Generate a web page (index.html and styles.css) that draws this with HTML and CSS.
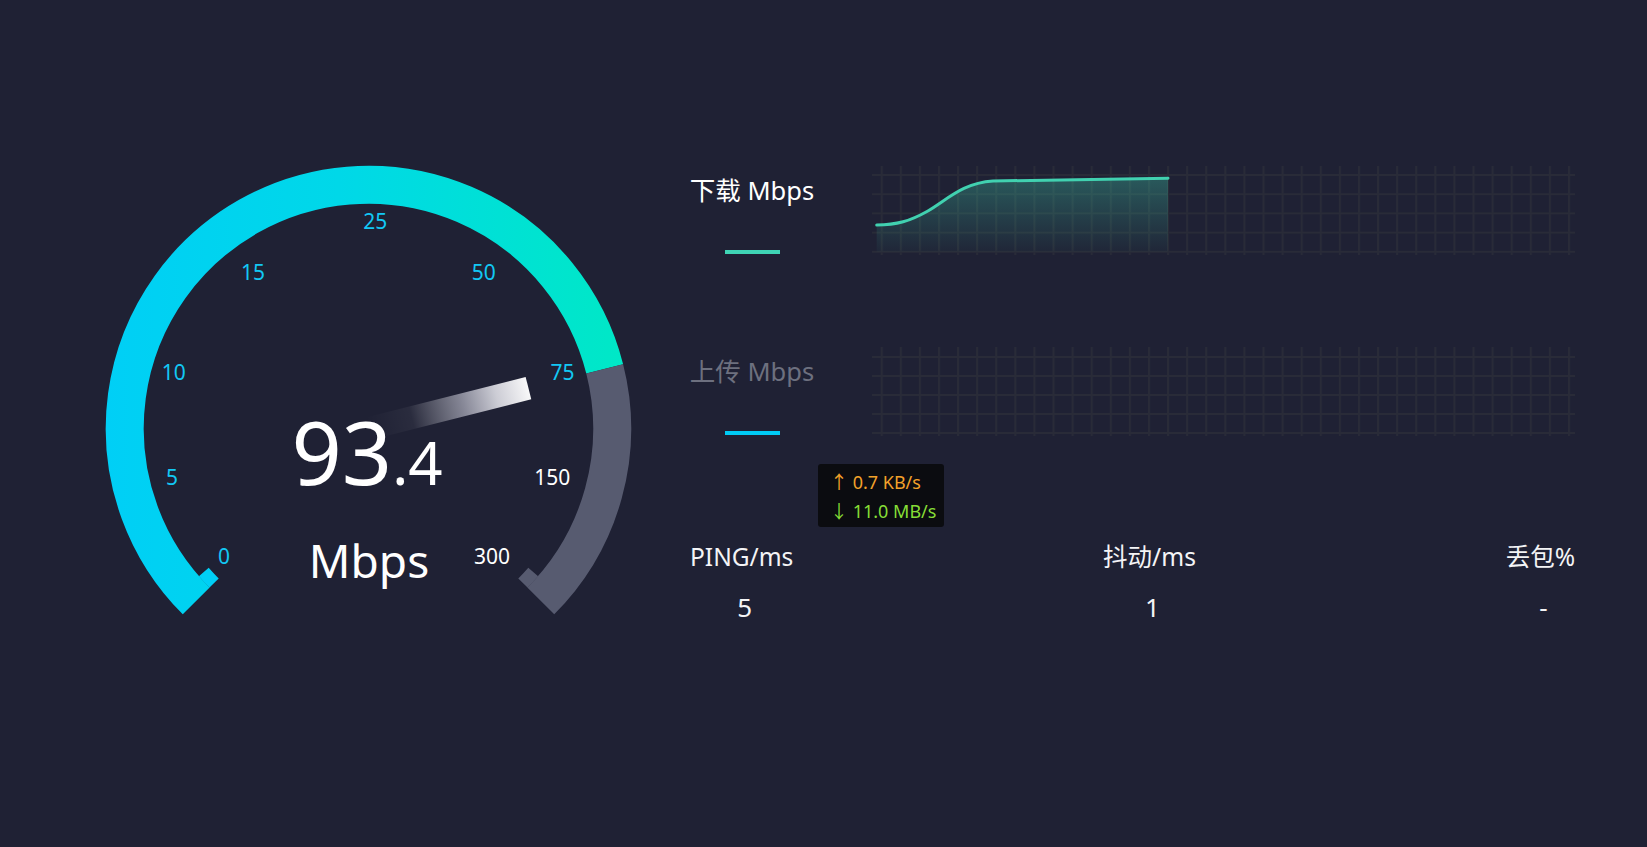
FILE: index.html
```html
<!DOCTYPE html>
<html lang="zh-CN">
<head>
<meta charset="utf-8">
<title>网络测速</title>
<link rel="stylesheet" href="styles.css">
</head>
<body>
<main class="page">
  <section class="gauge-panel">
    <svg class="gauge" viewBox="88 150 560 480" width="560" height="480">
      <defs>
        <linearGradient id="arcGrad" gradientUnits="userSpaceOnUse" x1="105" y1="0" x2="625" y2="0">
          <stop offset="0" stop-color="#00cff6"/>
          <stop offset="0.45" stop-color="#00d8e8"/>
          <stop offset="1" stop-color="#00e8c6"/>
        </linearGradient>
        <linearGradient id="ptrGrad" gradientUnits="userSpaceOnUse" x1="0" y1="0" x2="165" y2="0">
          <stop offset="0" stop-color="#ffffff" stop-opacity="0"/>
          <stop offset="0.27" stop-color="#ffffff" stop-opacity="0.05"/>
          <stop offset="0.58" stop-color="#e8e8f4" stop-opacity="0.5"/>
          <stop offset="0.8" stop-color="#f2f2f8" stop-opacity="0.82"/>
          <stop offset="1" stop-color="#ffffff" stop-opacity="0.97"/>
        </linearGradient>
      </defs>
      <path class="arc-done" d="M196.2,600.9 A243.7,243.7 0 1 1 604.7,368.8"/>
      <path class="arc-rest" d="M604.7,368.8 A243.7,243.7 0 0 1 540.8,600.9"/>
      <path class="cap cap-start" d="M214.1,583 A218.3,218.3 0 0 1 203.8,571.9"/>
      <path class="cap cap-end" d="M533.2,571.9 A218.3,218.3 0 0 1 522.9,583"/>
      <g class="scale">
        <text x="224" y="556.2">0</text>
        <text x="172" y="477.2">5</text>
        <text x="173.7" y="372">10</text>
        <text x="253" y="272.3">15</text>
        <text x="375.2" y="221.3">25</text>
        <text x="483.7" y="272.3">50</text>
        <text x="562.5" y="372">75</text>
        <text class="pending" x="552.3" y="477.2">150</text>
        <text class="pending" x="492" y="556.2">300</text>
      </g>
      <g transform="translate(368.5 428.6) rotate(-14.2)">
        <rect x="0" y="-11.5" width="165" height="23" fill="url(#ptrGrad)"/>
      </g>
      <text class="speed" x="367" y="485">93<tspan class="speed-decimal">.4</tspan></text>
      <text class="speed-unit" x="369" y="578">Mbps</text>
    </svg>
  </section>

  <section class="results">
    <div class="metric">
      <div class="metric-label">
        <span class="metric-name">下载 Mbps</span>
        <span class="metric-bar bar-down"></span>
      </div>
      <svg class="chart" viewBox="0 0 703 90" width="703" height="90">
        <defs>
          <pattern id="vlinesA" patternUnits="userSpaceOnUse" x="8.7" y="0" width="19.09" height="90">
            <rect class="grid-line" x="0" y="0" width="2" height="90"/>
          </pattern>
          <linearGradient id="areaGrad" x1="0" y1="0" x2="0" y2="1">
            <stop offset="0" stop-color="#3fd0b0" stop-opacity="0.32"/>
            <stop offset="1" stop-color="#3fd0b0" stop-opacity="0.03"/>
          </linearGradient>
        </defs>
        <rect x="0" y="0" width="700" height="89" fill="url(#vlinesA)"/>
        <rect class="grid-line" x="0" y="8" width="703" height="2"/>
        <rect class="grid-line" x="0" y="27.2" width="703" height="2"/>
        <rect class="grid-line" x="0" y="46.4" width="703" height="2"/>
        <rect class="grid-line" x="0" y="65.6" width="703" height="2"/>
        <rect class="grid-line" x="0" y="84.8" width="703" height="2"/>
        <path class="area" d="M4.7,59 C25,59 38,55 55,45.5 C75,34 90,17 121,15 L296,12.3 L296,85.8 L4.7,85.8 Z"/>
        <path class="line-down" d="M4.7,59 C25,59 38,55 55,45.5 C75,34 90,17 121,15 L296,12.3"/>
      </svg>
    </div>

    <div class="metric">
      <div class="metric-label">
        <span class="metric-name muted">上传 Mbps</span>
        <span class="metric-bar bar-up"></span>
      </div>
      <svg class="chart" viewBox="0 0 703 90" width="703" height="90">
        <defs>
          <pattern id="vlinesB" patternUnits="userSpaceOnUse" x="8.7" y="0" width="19.09" height="90">
            <rect class="grid-line" x="0" y="0" width="2" height="90"/>
          </pattern>
        </defs>
        <rect x="0" y="0" width="700" height="89" fill="url(#vlinesB)"/>
        <rect class="grid-line" x="0" y="9" width="703" height="2"/>
        <rect class="grid-line" x="0" y="28" width="703" height="2"/>
        <rect class="grid-line" x="0" y="47" width="703" height="2"/>
        <rect class="grid-line" x="0" y="66" width="703" height="2"/>
        <rect class="grid-line" x="0" y="85" width="703" height="2"/>
      </svg>
    </div>

    <div class="tooltip">
      <div class="tip-up">↑ 0.7 KB/s</div>
      <div class="tip-down">↓ 11.0 MB/s</div>
    </div>

    <div class="stats">
      <div class="stat">
        <div class="stat-label">PING/ms</div>
        <div class="stat-value">5</div>
      </div>
      <div class="stat">
        <div class="stat-label">抖动/ms</div>
        <div class="stat-value">1</div>
      </div>
      <div class="stat">
        <div class="stat-label">丢包%</div>
        <div class="stat-value">-</div>
      </div>
    </div>
  </section>
</main>
</body>
</html>
```

FILE: styles.css
```css
html, body {
  margin: 0;
  padding: 0;
  background: #1f2134;
  min-height: 100vh;
}

body {
  font-family: "Noto Sans", "Noto Sans CJK SC", sans-serif;
  color: #ffffff;
  overflow: hidden;
}

.page {
  display: flex;
  align-items: flex-start;
  padding: 150px 0 0 88px;
}

.gauge-panel {
  flex: none;
  width: 560px;
  height: 480px;
}

.gauge {
  display: block;
}

.arc-done {
  fill: none;
  stroke: url(#arcGrad);
  stroke-width: 38;
}

.arc-rest {
  fill: none;
  stroke: #575b70;
  stroke-width: 38;
}

.cap {
  fill: none;
  stroke-width: 13;
}

.cap-start {
  stroke: #00cff6;
}

.cap-end {
  stroke: #575b70;
}

.scale text {
  font-family: "Noto Sans", sans-serif;
  font-size: 21px;
  fill: #12c8f4;
  text-anchor: middle;
  dominant-baseline: central;
}

.scale text.pending {
  fill: #ffffff;
}

.speed {
  font-family: "Noto Sans", sans-serif;
  font-size: 88px;
  fill: #ffffff;
  text-anchor: middle;
}

.speed-decimal {
  font-size: 60px;
}

.speed-unit {
  font-family: "Noto Sans", sans-serif;
  font-size: 46px;
  fill: #ffffff;
  text-anchor: middle;
}

.results {
  flex: none;
  position: relative;
  width: 885px;
  margin-left: 42px;
  padding-top: 16px;
}

.metric {
  display: flex;
  align-items: flex-start;
  height: 90px;
}

.metric + .metric {
  margin-top: 91px;
}

.metric-label {
  width: 124px;
  padding-top: 8px;
  display: flex;
  flex-direction: column;
  align-items: center;
}

.metric-name {
  font-size: 25.5px;
  line-height: 32px;
  white-space: nowrap;
  color: #ffffff;
}

.metric-name.muted {
  color: #6d707f;
}

.metric-bar {
  display: block;
  width: 55px;
  height: 4px;
  margin-top: 44px;
}

.bar-down {
  background: #3fd4b5;
}

.bar-up {
  background: #00cbf5;
}

.chart {
  display: block;
  margin-left: 58px;
  flex: none;
}

.grid-line {
  fill: #292b38;
}

.area {
  fill: url(#areaGrad);
}

.line-down {
  fill: none;
  stroke: #41d1b0;
  stroke-width: 3;
  stroke-linecap: round;
}

.tooltip {
  position: absolute;
  left: 128px;
  top: 314px;
  width: 126px;
  height: 63px;
  box-sizing: border-box;
  padding: 4px 4px 0 12px;
  background: #0b0c10;
  border-radius: 3px;
  font-size: 18px;
  line-height: 29px;
  white-space: nowrap;
}

.tip-up {
  color: #f2a12a;
}

.tip-down {
  color: #86dd36;
}

.stats {
  display: flex;
  justify-content: space-between;
  margin-top: 104px;
}

.stat {
  text-align: center;
}

.stat-label {
  font-size: 24.5px;
  line-height: 32px;
  color: #f4f4f6;
  white-space: nowrap;
}

.stat-value {
  font-size: 26px;
  line-height: 34px;
  margin-top: 17px;
  padding-left: 6px;
  color: #f4f4f6;
}
```
